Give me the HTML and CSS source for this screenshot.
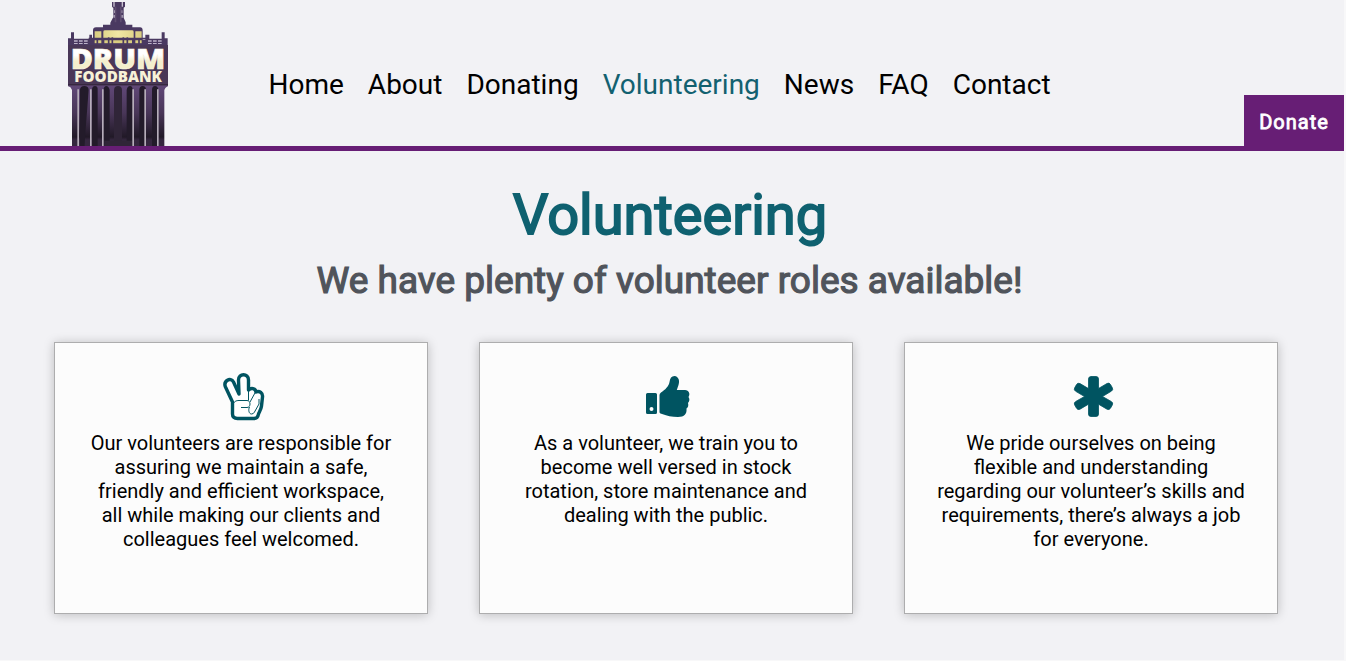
FILE: index.html
```html
<!DOCTYPE html>
<html lang="en">
<head>
<meta charset="utf-8">
<title>Volunteering - Drum Foodbank</title>
<link rel="stylesheet" href="styles.css">
</head>
<body>
<div class="page">
  <header class="header">
    <a class="logo" aria-label="Drum Foodbank">
      <svg width="116" height="146" viewBox="0 0 348 438">
        <defs>
          <linearGradient id="cream" x1="0" y1="0" x2="0" y2="1"><stop offset=".45" stop-color="#fff"/><stop offset=".6" stop-color="#f4efcb"/></linearGradient>
          <linearGradient id="glow" x1="0" y1="0" x2="1" y2="0"><stop offset="0" stop-color="#d9cd80"/><stop offset=".5" stop-color="#f0e7a4"/><stop offset="1" stop-color="#d9cd80"/></linearGradient>
          <linearGradient id="stone" x1="0" y1="0" x2="0" y2="1"><stop offset="0" stop-color="#614878"/><stop offset=".45" stop-color="#493658"/><stop offset=".85" stop-color="#211927"/><stop offset=".9" stop-color="#35273f"/><stop offset="1" stop-color="#35273f"/></linearGradient>
        </defs>
        <path fill="#4a3961" d="M152 6h43v14l-4 3v30l6 14v7h20v8h23q8 0 8 10v28h8V104h12v12h37V97h9v18h9v21H24v-21h9V97h9v19h46v-12h8v12h3V91q0-9 9-9h21v-8h22v-6l9-17V24l-4-4V6z"/>
        <path fill="#5e4d70" d="M164 20h5v47h-5zm16 0h5v47h-5z"/>
        <path fill="#c9c2d1" d="M160 6h4v14h-4zm25 0h4v14h-4zm-23 25h2v8h-2zm23 0h2v8h-2zm-24 14h3v8h-3zm24 0h3v8h-3z"/>
        <path fill="url(#glow)" d="M104 94h20v22h-20zm26 22V95q0-4 5-4h81q5 0 5 4v21zm96-22h19v22h-19z"/>
        <path fill="#d9cd80" d="M104 121h20v10h-20zm29 0h83v10h-83zm93 0h19v10h-19z"/>
        <path fill="#bdb3c9" d="M42 121h11v4H42zm15 0h11v4H57zm15 0h11v4H72zm192 0h11v4h-11zm15 0h11v4h-11zm15 0h11v4h-11zM42 129h11v3H42zm15 0h11v3H57zm15 0h11v3H72zm192 0h11v3h-11zm15 0h11v3h-11zm15 0h11v3h-11z"/>
        <path stroke="#4a3961" stroke-width="5" d="M86 116h176M86 132h176M112 116v20M146 112v24M157 112v24M190 112v24M202 112v24M237 116v20"/>
        <path fill="#493757" d="M24 135h300v124H24z"/>
        <path fill="url(#stone)" d="M24 257h300q-9 6-11 13v168H36V270q-2-9-12-13z"/>
        <g fill="#231b2a">
          <path d="M60 438V270q0-12 13-12t13 12l-13 168zM96 438V270q0-12 9-12t8 12v168zM238 438V270q0-12 10-12t10 12v168zM276 438V270q0-12 9-12t10 12v168zM130 438V270q2-12 9-12t10 12v168zM200 438V270q2-12 10-12t8 12v168z"/>
          <path fill="#302538" d="M162 438V271q0-13 12-13t12 13v167z"/>
          <path d="M60 270h13v168H60z"/>
        </g>
        <path fill="#b6adba" d="M52 268h5v170h-5zm38 0h5v170h-5zm36 0h5v170h-5zm91 0h5v170h-5zm36 0h5v170h-5zm38 0h5v170h-5z"/>
        <path fill="#302538" d="M133 422h83v16h-83z"/>
        <path fill="#37283f" d="M24 252h300v3H24z"/>
        <text class="logo-name" x="32" y="206" font-size="87" textLength="284" lengthAdjust="spacingAndGlyphs" fill="url(#cream)" stroke="#fbf8e6" stroke-width="2">DRUM</text>
        <text class="logo-name" x="43" y="245" font-size="46" textLength="263" lengthAdjust="spacingAndGlyphs" fill="#f7f2d8">FOODBANK</text>
      </svg>
    </a>
    <nav class="nav">
      <a>Home</a><a>About</a><a>Donating</a><a class="active">Volunteering</a><a>News</a><a>FAQ</a><a>Contact</a>
    </nav>
    <a class="donate">Donate</a>
  </header>
  <main>
    <h1 class="title">Volunteering</h1>
    <h2 class="subtitle">We have plenty of volunteer roles available!</h2>
    <section class="cards">
      <article class="card">
        <svg class="icon icon-peace" viewBox="0 0 60 60">
          <path fill="#fff" stroke="#005461" stroke-width="3.4" stroke-linejoin="round" d="M17.5 37L10.5 22C8 16 15.500 11.500 18.500 17L24 29L23.500 15C23.500 8 33.500 8 33.500 15V25C36 22.500 40.500 23 41 27C44.500 25.500 48 28 47.500 32L46.500 41C46 45 44 47 43.500 49C43 52 41.500 53.500 39 53.500H22.500C19 53.500 17.500 52 17.500 49Z"/>
          <path fill="none" stroke="#005461" stroke-width="1" d="M17.500 40C19 36.500 21 35.500 24 35.500H32C36 35.500 36 42.500 32 42.500H26M33.500 25V35.500M40.500 27L35 37M34.500 42C33 45 34 49 36.500 49Q38.500 49 39.500 47L44 39V34"/>
        </svg>
        <p>Our volunteers are responsible for<br>assuring we maintain a safe,<br>friendly and efficient workspace,<br>all while making our clients and<br>colleagues feel welcomed.</p>
      </article>
      <article class="card">
        <svg class="icon" viewBox="0 0 60 60">
          <path fill="#005461" fill-rule="evenodd" d="M9.500 28h8q1.500 0 1.500 1.500v18q0 1.500-1.500 1.500h-8Q8 49 8 47.500v-18Q8 28 9.500 28zm4 14a2 2 0 1 0 0 4a2 2 0 1 0 0-4z"/>
          <path fill="#005461" d="M21.500 30Q21.500 28.500 23 27.500C27 25 31 21 31.500 17C32 13 33.500 11 36.500 11C40.500 11.500 42 15.500 40.500 20L38.800 25H47C51 25 52.500 29 50.500 32Q52.500 35 50 38Q51 41.500 48.500 43.500C49 49 46.500 52 40 52C34 52 29 51 22.500 48.500Q21.500 48 21.500 47Z"/>
        </svg>
        <p>As a volunteer, we train you to<br>become well versed in stock<br>rotation, store maintenance and<br>dealing with the public.</p>
      </article>
      <article class="card">
        <svg class="icon" viewBox="0 0 60 60">
          <path fill="#005461" stroke="#005461" stroke-width=".8" d="M28 11.500h5q2.500 0 2.500 2.500v9.500l8.500-5q2.200-1.200 3.500 1l1.800 3.200q1.200 2.200-1 3.500L39.500 31.500l8.800 5q2.200 1.300 1 3.500l-1.800 3.200q-1.300 2.200-3.500 1l-8.500-5v9.800q0 2.500-2.500 2.500h-5q-2.500 0-2.500-2.500v-9.800l-8.500 5q-2.200 1.200-3.500-1l-1.800-3.200q-1.200-2.200 1-3.500l8.800-5l-8.800-5.200q-2.200-1.300-1-3.500l1.800-3.200q1.300-2.200 3.500-1l8.500 5v-9.500q0-2.500 2.500-2.500z"/>
        </svg>
        <p>We pride ourselves on being<br>flexible and understanding<br>regarding our volunteer’s skills and<br>requirements, there’s always a job<br>for everyone.</p>
      </article>
    </section>
  </main>
</div>
</body>
</html>
```
FILE: styles.css
```css
* { box-sizing: border-box; }
body {
  margin: 0;
  overflow: hidden;
  background: #f8f8f9;
  font-family: Roboto, "Liberation Sans", sans-serif;
  color: #000;
}
.page { width: 1344px; height: 660px; background: #f2f2f5; }
.header {
  display: flex;
  height: 151px;
  padding-left: 60px;
  border-bottom: 5px solid #671e75;
}
.logo { display: block; height: 146px; }
.logo svg { display: block; }
.logo-name { font-family: "Open Sans", sans-serif; font-weight: 800; }
.nav {
  display: flex;
  gap: 24px;
  margin-left: 92.5px;
  padding-top: 68px;
  font-size: 28px;
  line-height: 33px;
}
.nav .active { color: #136170; }
.donate {
  width: 100px;
  height: 56px;
  margin: 95px 0 -5px auto;
  background: #671e75;
  color: #fff;
  font-size: 20px;
  font-weight: 400;
  line-height: 54px;
  letter-spacing: 1px;
  text-align: center;
  -webkit-text-stroke: .8px #fff;
}
.title {
  margin: 31px 0 0;
  padding-right: 4px;
  text-align: center;
  font-size: 56px;
  font-weight: 400;
  line-height: 66px;
  color: #0f6170;
  -webkit-text-stroke: 1.8px #0f6170;
}
.subtitle {
  margin: 11px 0 0;
  padding-right: 5px;
  text-align: center;
  font-size: 37px;
  font-weight: 400;
  line-height: 44px;
  color: #50545b;
  -webkit-text-stroke: 1.2px #50545b;
}
.cards { display: flex; gap: 51px; padding: 39px 0 0 54px; }
.card {
  width: 374px;
  height: 272px;
  padding-top: 22px;
  border: 1px solid #adadae;
  background: #fcfcfc;
  box-shadow: 0 1px 10px rgba(0, 0, 0, .22);
  text-align: center;
}
.icon { display: block; width: 60px; height: 60px; margin: 0 auto; position: relative; left: 2px; }
.icon-peace { left: 4px; }
.card p { margin: 6px 0 0; font-size: 20px; line-height: 24px; }
```
